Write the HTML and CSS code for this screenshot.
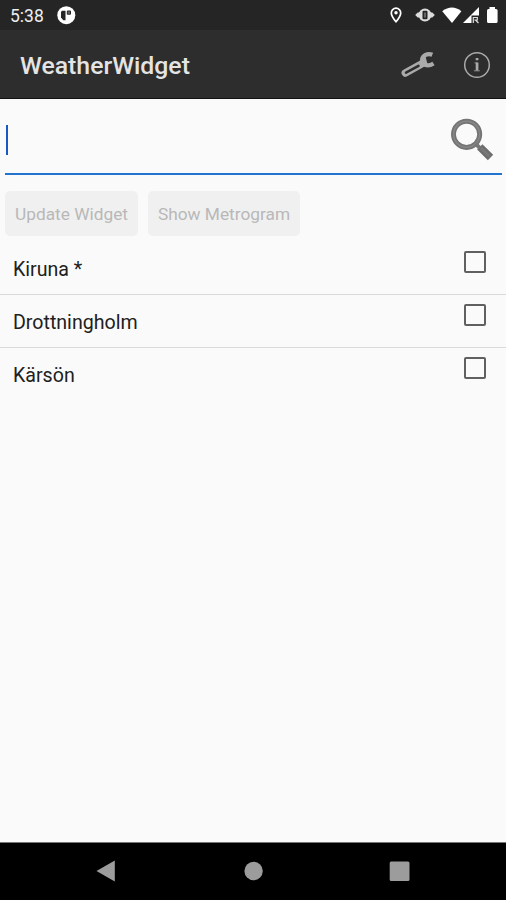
FILE: index.html
```html
<!DOCTYPE html>
<html lang="en">
<head>
<meta charset="utf-8">
<title>WeatherWidget</title>
<link rel="stylesheet" href="styles.css">
</head>
<body>
<div class="status">
  <span class="clock">5:38</span>
  <svg class="notice" width="20" height="20" viewBox="56 5 20 20"><circle cx="66.3" cy="15.2" r="9" fill="#fff"/><path d="M62 10.800h3.500v9.400h-2.200L61 17.500v-5.700z" fill="#252525"/><path d="M67.300 11h3.200v3.200h-3.200z" fill="#666" stroke="#252525"/></svg>
  <svg class="indicators" width="116" height="24" viewBox="386 3 116 24">
    <path d="M396 8.200a4.700 4.700 0 0 0-4.700 4.700c0 3.200 4.700 8.800 4.700 8.800s4.700-5.600 4.700-8.800a4.700 4.700 0 0 0-4.700-4.700z" fill="none" stroke="#fff" stroke-width="1.700"/><circle cx="396" cy="12.800" r="1.700" fill="#fff"/>
    <path d="M415.200 15l2.500-2.500h14.600l2.500 2.500-2.500 2.500h-14.600z" fill="#ddd"/><circle cx="425" cy="15" r="6.500" fill="#ddd"/><rect x="422.500" y="10.800" width="5" height="8.400" rx="1" fill="#252525"/><path d="M425 12.500v5" stroke="#777" stroke-width="1.500"/>
    <path d="M442.200 11.200Q452 3.800 461.400 11.200L452 23z" fill="#fff"/>
    <path d="M463 23L479 7v8.500h-7.500V23z" fill="#fff"/><path d="M473.300 23v-5.500h4v2.500h-3M475.500 20l3 3" fill="none" stroke="#ddd" stroke-width="1.200"/>
    <path d="M489.500 7h5.500v2h1q1.600 0 1.600 1.600v10.800q0 1.600-1.600 1.600h-7.400q-1.600 0-1.600-1.600V10.600q0-1.600 1.600-1.600h.9z" fill="#fff"/>
  </svg>
</div>
<header class="appbar">
  <h1>WeatherWidget</h1>
  <svg width="96" height="40" viewBox="398 45 96 40">
    <path d="M405.300 73L421.500 64" fill="none" stroke="#aaa" stroke-width="7.500" stroke-linecap="round"/><path d="M432.300 54.800C427.500 52.800 422.500 55.500 422 60C421.800 65 427.500 67.300 433.500 63.500" fill="none" stroke="#aaa" stroke-width="4.200"/><path d="M420.500 60l5-3.500 2 7.500-5 3z" fill="#aaa"/><path d="M406 72.700L418.500 65.800" stroke="#2d2d2d" stroke-width="2.500" stroke-linecap="round"/>
    <circle cx="477" cy="65" r="12.300" fill="none" stroke="#aaa" stroke-width="1.500"/><path d="M475.700 58h2.700v2.200h-2.700zM475.700 62.500h2.700v8h-2.700z" fill="#aaa"/><path d="M474.500 62.900h2.500M474 70.800h5.800" stroke="#aaa" stroke-width=".8"/>
  </svg>
</header>
<main>
  <div class="search">
    <span class="caret"></span>
    <svg width="48" height="48" viewBox="448 116 48 48"><circle cx="466.600" cy="134.300" r="13.100" fill="none" stroke="#747474" stroke-width="5"/><circle cx="466.600" cy="134.300" r="13" fill="none" stroke="#888" stroke-width="1.500"/><path d="M475.500 143.700l4 4" stroke="#777" stroke-width="4"/><path d="M479.800 146.800l10.700 10.700" stroke="#6d6d6d" stroke-width="7.500"/><path d="M481 148l8.200 8.200" stroke="#787878" stroke-width="3"/></svg>
  </div>
  <div class="buttons">
    <button class="update" disabled>Update Widget</button>
    <button class="show" disabled>Show Metrogram</button>
  </div>
  <ul class="places">
    <li><span>Kiruna *</span><i class="box"></i></li>
    <li><span>Drottningholm</span><i class="box"></i></li>
    <li><span>Kärsön</span><i class="box"></i></li>
  </ul>
</main>
<nav>
  <svg width="506" height="57" viewBox="0 843 506 57" fill="#9c9c9c"><path d="M96.500 871L114.800 860.500V881.500z"/><circle cx="253.600" cy="871" r="9.200"/><rect x="389.700" y="861.500" width="19.800" height="19.500" rx="1.500"/></svg>
</nav>
</body>
</html>
```
FILE: styles.css
```css
* { box-sizing: border-box; }
body {
  margin: 0;
  height: 900px;
  display: flex;
  flex-direction: column;
  overflow: hidden;
  background: #fafafa;
  font-family: Roboto, sans-serif;
}
svg { display: block; flex: none; }
.status {
  height: 30px;
  display: flex;
  align-items: center;
  padding: 0 4px 0 10px;
  background: #252525;
}
.clock { width: 46px; padding-top: 2px; color: #eee; font-size: 17.5px; line-height: 20px; }
.indicators { margin-left: auto; }
.appbar {
  height: 69px;
  display: flex;
  align-items: center;
  justify-content: space-between;
  padding: 2px 12px 0 20px;
  background: #2d2d2d;
  border-bottom: 1px solid #111;
}
h1 { margin: 2px 0 0; color: #e4e4e4; font-size: 24.8px; line-height: 30px; font-weight: 500; }
main { flex: 1; }
.search {
  height: 76px;
  margin: 0 4px 0 5px;
  padding: 17px 6px 0 0;
  display: flex;
  justify-content: space-between;
  border-bottom: 2px solid #2474cf;
}
.caret { width: 2px; height: 30px; margin: 9px 0 0 1px; background: #1958c4; }
.buttons { display: flex; gap: 10px; padding: 16px 5px 0; }
button {
  height: 45px;
  padding: 1px 0 0;
  border: 0;
  border-radius: 5px;
  background: #f0f0f0;
  color: #b8b8b8;
  font-family: inherit;
  font-size: 17.3px;
  white-space: nowrap;
}
.update { width: 133px; }
.show { width: 152px; }
.places { margin: 6px 0 0; padding: 0; list-style: none; }
li {
  height: 53px;
  display: flex;
  justify-content: space-between;
  padding: 9px 20px 0 13px;
  border-bottom: 1px solid #dadada;
  color: #202020;
  font-size: 19.6px;
  line-height: 37px;
}
li:last-child { border-bottom: 0; }
.box { width: 22px; height: 22px; border: 2px solid #606060; border-radius: 2px; }
nav { height: 58px; background: #000; border-top: 1px solid #777; }
```
